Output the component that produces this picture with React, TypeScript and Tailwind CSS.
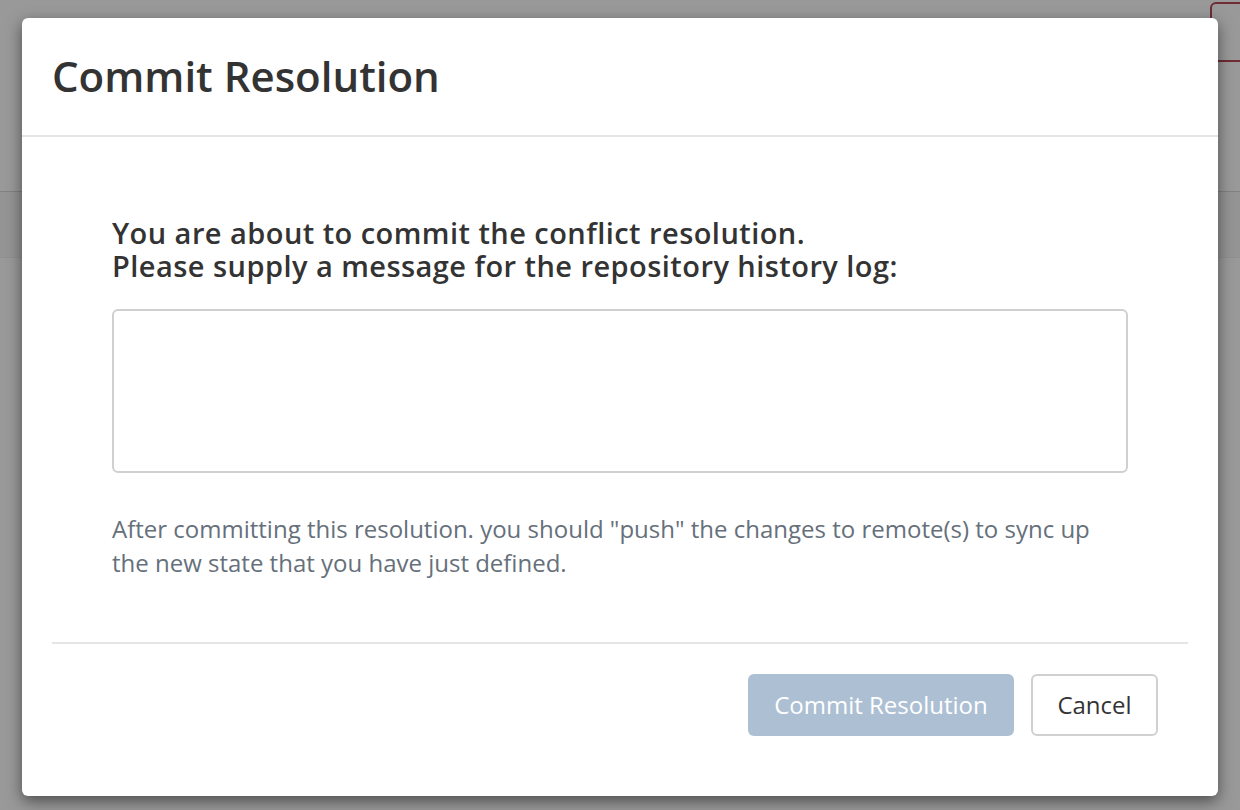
export default function App() {
  return (
    <div className="relative h-[810px] w-[1240px] overflow-hidden bg-white font-['Open_Sans','Noto_Sans',sans-serif]">
      {/* page behind the modal */}
      <div className="flex h-[192px] justify-end border-b border-[#d8d8d8] bg-white">
        <div className="mt-[2px] mr-[-40px] h-[60px] w-[70px] rounded-md border-2 border-[#b94a58]"></div>
      </div>
      <div className="h-[66px] border-b border-[#f0f0f0] bg-[#f7f7f7]"></div>

      {/* overlay */}
      <div className="absolute inset-0 bg-black/40">
        <div className="mx-auto mt-[18px] flex h-[778px] w-[1196px] flex-col rounded-md bg-white shadow-[0_5px_15px_rgba(0,0,0,0.5)]">
          <div className="flex h-[119px] items-center border-b-2 border-[#e5e5e5] px-[30px] pb-[2px]">
            <h1 className="text-[42px] font-semibold text-[#333]">Commit Resolution</h1>
          </div>

          <div className="flex-1 px-[90px] pt-[79px]">
            <h2 className="text-[29px] font-semibold leading-[33px] tracking-[0.45px] text-[#333]">
              <span className="block">You are about to commit the conflict resolution.</span>
              <span className="block">Please supply a message for the repository history log:</span>
            </h2>
            <textarea className="mt-[27px] block h-[164px] w-full resize-none rounded-md border-2 border-[#d0d0d0] p-3 outline-none"></textarea>
            <p className="mt-[39px] text-[24px] leading-[34px] text-[#66707b]">
              After committing this resolution. you should "push" the changes to remote(s) to sync up
              <br />
              the new state that you have just defined.
            </p>
          </div>

          <div className="mx-[30px] flex h-[154px] items-start justify-end gap-[17px] border-t-2 border-[#e5e5e5] pt-[30px] pr-[30px]">
            <button className="h-[62px] w-[266px] rounded-md bg-[#adc0d3] text-[24px] text-white">Commit Resolution</button>
            <button className="h-[62px] w-[127px] rounded-md border-2 border-[#d0d0d0] bg-white text-[24px] text-[#333]">Cancel</button>
          </div>
        </div>
      </div>
    </div>
  );
}
